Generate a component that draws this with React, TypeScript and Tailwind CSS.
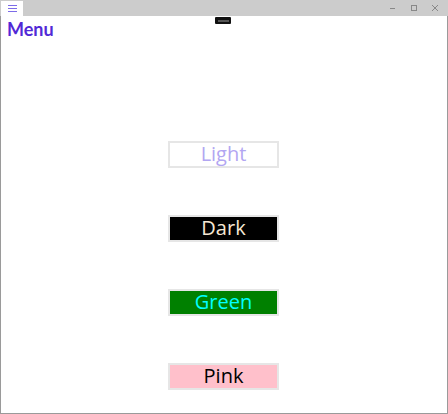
import React from "react";

const font = { fontFamily: '"Open Sans", "Noto Sans", sans-serif' };

function Btn({ label, cls }: { label: string; cls: string }) {
  return (
    <div className="border-2 border-[#e6e6e6] w-[111px] h-[27px] box-border">
      <div className={`w-full h-full flex items-center justify-center text-[20px] leading-none ${cls}`}>
        <span className="-mt-[1px]">{label}</span>
      </div>
    </div>
  );
}

export default function App() {
  return (
    <div className="w-[448px] h-[414px] bg-white relative overflow-hidden" style={font}>
      <div className="absolute inset-0 border border-[#9a9a9a] border-t-0 pointer-events-none" />
      {/* title bar */}
      <div className="h-[16px] bg-[#cccccc] flex items-stretch relative">
        <div className="w-[22px] bg-white ml-[1px] mt-[1px] flex items-center justify-center">
          <svg width="9" height="7" viewBox="0 0 9 7">
            <rect x="0" y="0" width="9" height="1" fill="#7d6ce8" />
            <rect x="0" y="3" width="9" height="1" fill="#7d6ce8" />
            <rect x="0" y="6" width="9" height="1" fill="#7d6ce8" />
          </svg>
        </div>
        <div className="flex-1" />
        <div className="flex items-center gap-[13px] pr-[9px] text-[#777]">
          <svg width="8" height="8" viewBox="0 0 8 8"><rect x="1" y="4" width="5" height="1" fill="#888" /></svg>
          <svg width="8" height="8" viewBox="0 0 8 8"><rect x="1.5" y="1.5" width="5" height="5" fill="none" stroke="#888" /></svg>
          <svg width="8" height="8" viewBox="0 0 8 8"><path d="M1 1 L7 7 M7 1 L1 7" stroke="#888" strokeWidth="1" /></svg>
        </div>
      </div>
      {/* small tooltip-like badge */}
      <div className="absolute left-[215px] top-[17px] w-[16px] h-[7px] bg-[#111] rounded-[1px] flex items-center justify-center">
        <div className="w-[11px] h-[2px] bg-[#555]" />
      </div>
      <div
        className="pl-[7px] pt-[3px] text-[18px] font-bold text-[#5229d6] leading-[20px]"
        style={{ fontFamily: 'Lato, "Open Sans", sans-serif' }}
      >
        Menu
      </div>
      <div className="flex flex-col items-center gap-[47px] mt-[102px] ml-[-1px]">
        <Btn label="Light" cls="bg-white text-[#b2a6f2]" />
        <Btn label="Dark" cls="bg-black text-[#f6e8d4]" />
        <Btn label="Green" cls="bg-[#008000] text-[#00ffff]" />
        <Btn label="Pink" cls="bg-[#ffc0cb] text-black" />
      </div>
    </div>
  );
}
